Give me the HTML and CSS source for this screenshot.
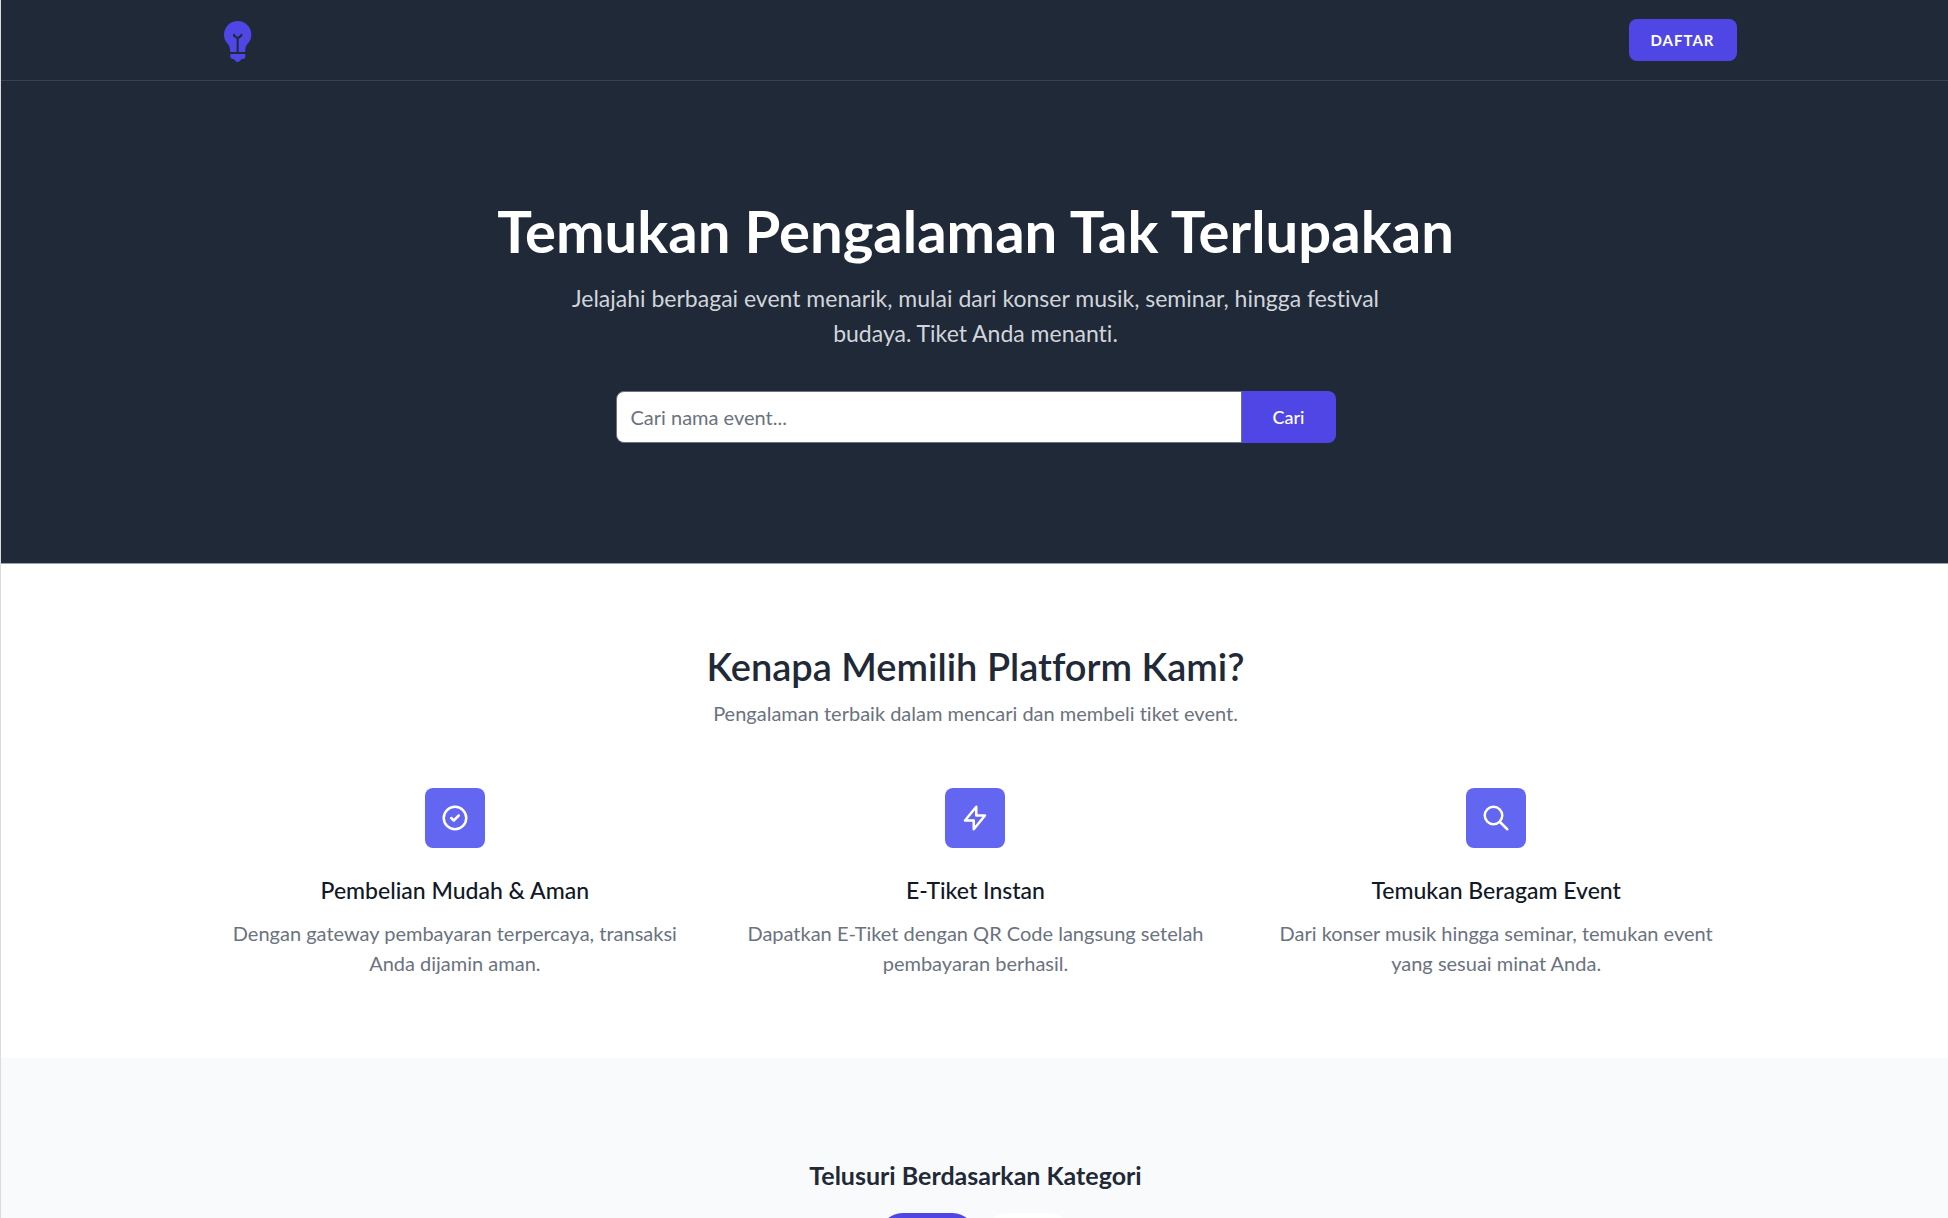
FILE: index.html
```html
<!DOCTYPE html>
<html lang="id">
<head>
  <meta charset="utf-8">
  <meta name="viewport" content="width=device-width, initial-scale=1">
  <title>Event</title>
  <link rel="stylesheet" href="styles.css">
</head>
<body>
  <header class="navbar">
    <div class="container navbar-inner">
      <a class="logo" href="#">
        <svg viewBox="0 0 135 135" aria-hidden="true">
          <path fill="#4f46e5" d="M68 9a41 41 0 0 1 41 41c0 13-5 20-11 27-5 6-7 11-7 18v4q0 3-3 3H48q-3 0-3-3v-4c0-7-2-12-7-18C32 70 27 63 27 50A41 41 0 0 1 68 9z"/>
          <path fill="#4f46e5" d="M46 108h45v8q0 6-7 7l-5 1q-4 8-11 9-7-1-11-9l-5-1q-6-1-6-7z"/>
          <path fill="none" stroke="#1f2937" stroke-width="6" stroke-linecap="round" stroke-linejoin="round" d="M57 50v3l11 8 11-8v-3M68 61v41"/>
        </svg>
      </a>
      <button class="btn-register" type="button">DAFTAR</button>
    </div>
  </header>

  <main>
    <section class="hero">
      <div class="container">
        <h1 class="hero-title">Temukan Pengalaman Tak Terlupakan</h1>
        <p class="hero-text">Jelajahi berbagai event menarik, mulai dari konser musik, seminar, hingga festival budaya. Tiket Anda menanti.</p>
        <form class="search">
          <input class="search-input" type="text" placeholder="Cari nama event..." aria-label="Cari nama event...">
          <button class="search-button" type="submit">Cari</button>
        </form>
      </div>
    </section>

    <section class="features">
      <div class="container">
        <h2 class="section-title">Kenapa Memilih Platform Kami?</h2>
        <p class="section-text">Pengalaman terbaik dalam mencari dan membeli tiket event.</p>
        <div class="feature-grid">
          <article class="feature">
            <div class="feature-icon">
              <svg viewBox="0 0 24 24" aria-hidden="true"><path d="M9 12l2 2 4-4m6 2a9 9 0 11-18 0 9 9 0 0118 0z"/></svg>
            </div>
            <h3 class="feature-title">Pembelian Mudah &amp; Aman</h3>
            <p class="feature-text">Dengan gateway pembayaran terpercaya, transaksi Anda dijamin aman.</p>
          </article>
          <article class="feature">
            <div class="feature-icon">
              <svg viewBox="0 0 24 24" aria-hidden="true"><path d="M13 10V3L4 14h7v7l9-11h-7z"/></svg>
            </div>
            <h3 class="feature-title">E-Tiket Instan</h3>
            <p class="feature-text">Dapatkan E-Tiket dengan QR Code langsung setelah pembayaran berhasil.</p>
          </article>
          <article class="feature">
            <div class="feature-icon">
              <svg viewBox="0 0 24 24" aria-hidden="true"><path d="M21 21l-6-6m2-5a7 7 0 11-14 0 7 7 0 0114 0z"/></svg>
            </div>
            <h3 class="feature-title">Temukan Beragam Event</h3>
            <p class="feature-text">Dari konser musik hingga seminar, temukan event yang sesuai minat Anda.</p>
          </article>
        </div>
      </div>
    </section>

    <section class="categories">
      <div class="container">
        <h2 class="categories-title">Telusuri Berdasarkan Kategori</h2>
        <div class="pills">
          <button class="pill pill-active" type="button"></button>
          <button class="pill" type="button"></button>
        </div>
      </div>
    </section>
  </main>
</body>
</html>
```
FILE: styles.css
```css
*,
*::before,
*::after {
  box-sizing: border-box;
}

body {
  margin: 0;
  border-left: 1px solid #d9dbdf;
  background: #f9fafb;
  color: #1f2937;
  font-family: Lato, "Liberation Sans", sans-serif;
  font-size: 20px;
  font-variant-ligatures: none;
  line-height: 30px;
}

h1,
h2,
h3,
p {
  margin: 0;
}

button,
input {
  font-family: inherit;
}

.container {
  max-width: 1600px;
  margin: 0 auto;
  padding: 0 38px 0 40px;
}

.navbar {
  background: #1f2937;
  border-bottom: 1px solid #374151;
}

.navbar-inner {
  display: flex;
  align-items: center;
  justify-content: space-between;
  min-height: 80px;
}

.logo {
  display: block;
}

.logo svg {
  display: block;
  width: 45px;
  height: 45px;
}

.btn-register {
  padding: 11px 22px;
  border: 0;
  border-radius: 8px;
  background: #4f46e5;
  color: #fff;
  font-size: 15px;
  font-weight: 700;
  line-height: 20px;
  letter-spacing: 1px;
}

.hero {
  padding: 120px 0;
  background: #1f2937;
  text-align: center;
}

.hero-title {
  color: #fff;
  font-size: 58px;
  font-weight: 700;
  line-height: 60px;
}

.hero-text {
  max-width: 840px;
  margin: 20px auto 0;
  color: #d1d5db;
  font-size: 23px;
  line-height: 35px;
}

.search {
  display: flex;
  max-width: 720px;
  margin: 40px auto 0;
}

.search-input {
  flex: 1;
  min-width: 0;
  height: 52px;
  padding: 0 14px;
  border: 1px solid #6b7280;
  border-radius: 8px 0 0 8px;
  background: #fff;
  color: #1f2937;
  font-size: 20px;
}

.search-input::placeholder {
  color: #6b7280;
  opacity: 1;
}

.search-button {
  padding: 0 31px;
  border: 0;
  border-radius: 0 8px 8px 0;
  background: #4f46e5;
  color: #fff;
  font-size: 18px;
  font-weight: 500;
}

.features {
  padding: 79px 0 80px;
  border-top: 1px solid #9ca3af;
  background: #fff;
  text-align: center;
}

.section-title {
  font-size: 38px;
  font-weight: 600;
  line-height: 46px;
}

.section-text {
  margin-top: 9px;
  color: #6b7280;
}

.feature-grid {
  display: grid;
  grid-template-columns: repeat(3, 1fr);
  gap: 40px;
  margin-top: 60px;
}

.feature-icon {
  display: flex;
  align-items: center;
  justify-content: center;
  width: 60px;
  height: 60px;
  margin: 0 auto;
  border-radius: 8px;
  background: #6366f1;
}

.feature-icon svg {
  width: 30px;
  height: 30px;
  fill: none;
  stroke: #fff;
  stroke-width: 2;
  stroke-linecap: round;
  stroke-linejoin: round;
}

.feature-title {
  margin-top: 25px;
  font-size: 23px;
  font-weight: 500;
  line-height: 35px;
  color: #111827;
}

.feature-text {
  margin-top: 10px;
  padding: 0 8px;
  color: #6b7280;
}

.categories {
  padding: 100px 0;
  text-align: center;
}

.categories-title {
  font-size: 25px;
  font-weight: 700;
  line-height: 35px;
}

.pills {
  display: flex;
  justify-content: center;
  gap: 10px;
  margin-top: 20px;
}

.pill {
  width: 86px;
  height: 45px;
  border: 0;
  border-radius: 23px;
  background: #fff;
}

.pill-active {
  width: 95px;
  background: #4f46e5;
}
```
